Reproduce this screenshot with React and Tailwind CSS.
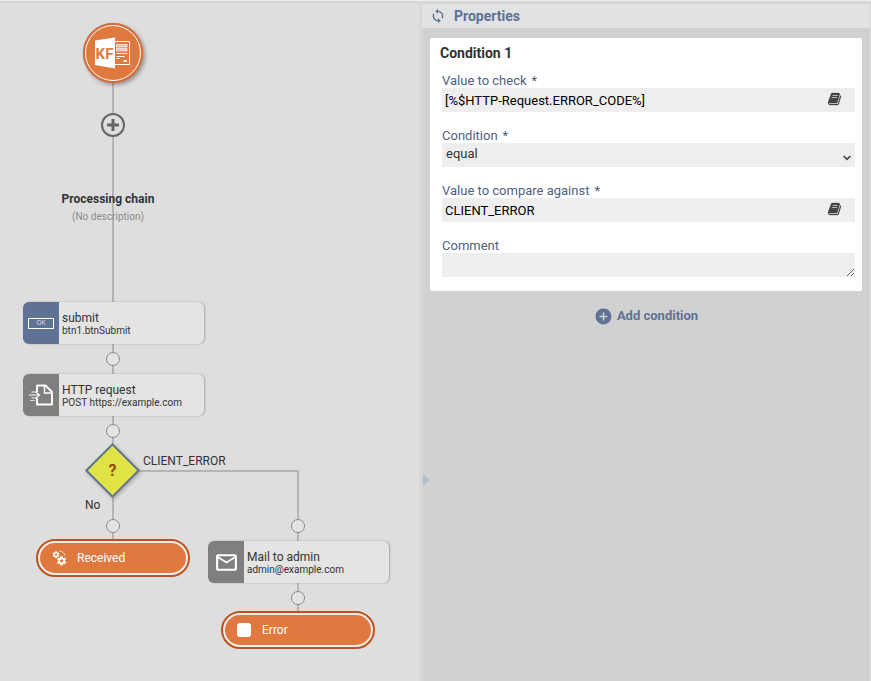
import { useState } from "react";
import { MdAddCircle, MdLoop, MdOutlineMail } from "react-icons/md";

const TEXT_FIELD =
  "w-full h-6 bg-[#eeeeee] px-[3px] text-[13px] text-black outline-none";

function BookIcon() {
  return (
    <svg viewBox="0 0 1792 1792" className="size-[14px]" fill="#444444" stroke="#444444" strokeWidth="40">
      <path d="M1639 478q40 57 18 129l-275 906q-19 64-76.5 107.5t-122.5 43.5h-923q-77 0-148.5-53.5t-99.5-131.5q-24-67-2-127 0-4 3-27t4-37q1-8-3-21.5t-3-19.5q2-11 8-21t16.5-23.5 16.5-23.5q23-38 45-91.5t30-91.5q3-10 .5-30t-.5-28q3-11 17-28t17-23q21-36 42-92t25-90q1-9-2.5-32t.5-28q4-13 22-30.5t22-22.5q19-26 42.5-84.5t27.5-96.5q1-8-3-25.5t-2-26.5q2-8 9-18t18-23 17-21q8-12 16.5-30.5t15-35 16-36 19.5-32 26.5-23.5 36-11.5 47.5 5.5l-1 3q38-9 51-9h761q74 0 114 56t18 130l-274 906q-36 119-71.5 153.5t-128.5 34.5h-869q-27 0-38 15-11 16-1 43 24 70 144 70h923q29 0 56-15.5t35-41.5l300-987q7-22 5-57 38 15 59 43zm-1064 2q-4 13 2 22.5t20 9.5h608q13 0 25.5-9.5t16.5-22.5l21-64q4-13-2-22.5t-20-9.5h-608q-13 0-25.5 9.5t-16.5 22.5zm-83 256q-4 13 2 22.5t20 9.5h608q13 0 25.5-9.5t16.5-22.5l21-64q4-13-2-22.5t-20-9.5h-608q-13 0-25.5 9.5t-16.5 22.5z" />
    </svg>
  );
}

function FormLogo() {
  return (
    <svg viewBox="0 0 36 32" className="w-9 h-8">
      <rect x="19" y="4.5" width="15.5" height="23" fill="none" stroke="#fff" />
      <rect x="21.5" y="7.5" width="10.5" height="2.5" fill="#f0c0a5" stroke="#fff" strokeWidth=".6" />
      <rect x="21.5" y="11.5" width="10.5" height="2.5" fill="#f0c0a5" stroke="#fff" strokeWidth=".6" />
      <path d="M21.5 16.5h11M21.5 19.5h8M21.5 21.5h3" stroke="#fff" strokeWidth="1.2" />
      <rect x="28.5" y="23" width="3.5" height="2" fill="#fff" />
      <path d="M0 3.500 20 .5v31L0 28z" fill="#fff" />
      <text
        x="9.5"
        y="21.5"
        textAnchor="middle"
        fontSize="15"
        fontWeight="700"
        fontFamily="'Liberation Sans Narrow', Roboto, sans-serif"
        fill="#e07940"
      >
        KF
      </text>
    </svg>
  );
}

function OkIcon() {
  return (
    <span className="flex h-[11px] w-[26px] items-center justify-center border border-white text-[7px] leading-none text-[#d5dae4]">
      OK
    </span>
  );
}

function RequestIcon() {
  return (
    <svg viewBox="0 0 24 24" className="size-6" fill="none" stroke="#fff">
      <path d="M8 9V2.500h8.500L23 9v12.500H8V15" strokeWidth="1.900" strokeLinejoin="round" />
      <path d="M15.500 3v7H22" strokeWidth="1.500" />
      <path d="M2.500 9H7l3.500 3L7 15H2.500M0 12h10" strokeWidth="1.100" />
      <path d="M1 17.500h5" strokeWidth="1" opacity=".7" />
    </svg>
  );
}

function Gear({ cx, cy, r }) {
  return (
    <g transform={`translate(${cx} ${cy})`}>
      {[0, 60, 120].map((a) => (
        <path key={a} d={`M0 ${-r}V${r}`} transform={`rotate(${a})`} stroke="#fff" strokeWidth={r / 1.8} />
      ))}
      <circle r={r * 0.74} fill="#fff" />
      <circle r={r * 0.36} fill="#e07940" />
    </g>
  );
}

function GearsIcon() {
  return (
    <svg viewBox="0 0 15 16" className="w-[15px] h-4">
      <Gear cx={4} cy={4.6} r={3.3} />
      <Gear cx={9.6} cy={10.8} r={4.6} />
      <path d="M7 1c3 0 5 1.500 6 4.500" fill="none" stroke="#fff" strokeWidth=".7" />
    </svg>
  );
}

function Joint({ className }) {
  return (
    <span
      className={`absolute size-[14px] rounded-full border border-[#8f8990] bg-[#e4e4e2] ${className}`}
    />
  );
}

function ActionNode({ title, subtitle, icon, iconBg, className }) {
  return (
    <div
      className={`absolute flex h-[42px] w-[181px] overflow-hidden rounded-md bg-[#e4e4e2] text-[#333333] shadow-[1px_0_2px_rgba(0,0,0,0.25)] ${className}`}
    >
      <span className={`flex w-9 shrink-0 items-center justify-center ${iconBg}`}>
        {icon}
      </span>
      <div className="flex flex-col justify-center pl-[3px] pt-px">
        <span className="text-xs leading-[14px]">{title}</span>
        <span className="text-[10px] leading-3">{subtitle}</span>
      </div>
    </div>
  );
}

function EndNode({ label, icon, className }) {
  return (
    <div
      className={`absolute h-[38px] w-[154px] rounded-full border-2 border-[#bd5420] bg-[#f0eeec] p-[2px] ${className}`}
    >
      <div className="flex h-full items-center rounded-full bg-[#e07940] pl-3 text-xs text-white">
        <span className="flex w-[25px]">{icon}</span>
        {label}
      </div>
    </div>
  );
}

function ProcessCanvas() {
  return (
    <main className="relative w-[419px] shrink-0 bg-[#dedede]">
      {/* Connectors */}
      <svg className="absolute left-0 top-0 h-full w-full" fill="none" stroke="#b5b5b5" strokeWidth="2">
        <path d="M113 70V540" />
        <path d="M113 468H298V612" />
      </svg>

      <div className="absolute left-[83px] top-5 flex size-[60px] items-center justify-center rounded-full bg-[#e07940] shadow-[2px_2px_4px_rgba(0,0,0,0.35)] ring-2 ring-inset ring-[#d06e3e]">
        <span className="absolute inset-[2px] rounded-full border border-white" />
        <FormLogo />
      </div>

      <button
        aria-label="Add"
        className="absolute left-[101px] top-[110px] size-6 rounded-full border-2 border-[#666666] bg-[#dedede]"
      >
        <svg viewBox="0 0 20 20" stroke="#666666" strokeWidth="3">
          <path d="M10 4v12M4 10h12" />
        </svg>
      </button>

      <div className="absolute left-[23px] top-[188px] w-[170px] text-center">
        <h2 className="text-xs font-bold leading-4 text-[#333333]">Processing chain</h2>
        <p className="text-[10px] leading-5 text-[#8a8a8a]">(No description)</p>
      </div>

      <ActionNode
        title="submit"
        subtitle="btn1.btnSubmit"
        icon={<OkIcon />}
        iconBg="bg-[#607196]"
        className="left-[23px] top-[299px]"
      />
      <Joint className="left-[106px] top-[349px]" />
      <ActionNode
        title="HTTP request"
        subtitle="POST https://example.com"
        icon={<RequestIcon />}
        iconBg="bg-[#7f7f7f]"
        className="left-[23px] top-[371px]"
      />
      <Joint className="left-[106px] top-[421px]" />

      <div className="absolute left-[93px] top-[448px] flex size-[39px] rotate-45 items-center justify-center border-2 border-[#607196] bg-[#dfe345] shadow-[2px_0_4px_rgba(0,0,0,0.25)]">
        <span className="-rotate-45 text-base font-bold text-[#964b00]">?</span>
      </div>
      <span className="absolute left-[143px] top-[450px] text-xs leading-4 text-[#333333]">
        CLIENT_ERROR
      </span>
      <span className="absolute left-[85px] top-[494px] text-xs leading-4 text-[#333333]">No</span>

      <Joint className="left-[106px] top-[516px]" />
      <EndNode label="Received" icon={<GearsIcon />} className="left-9 top-[536px]" />

      <Joint className="left-[291px] top-[516px]" />
      <ActionNode
        title="Mail to admin"
        subtitle="admin@example.com"
        icon={<MdOutlineMail size={25} color="#fff" />}
        iconBg="bg-[#7f7f7f]"
        className="left-[208px] top-[538px]"
      />
      <Joint className="left-[291px] top-[588px]" />
      <EndNode
        label="Error"
        icon={<span className="size-[14px] rounded-[3px] bg-white" />}
        className="left-[221px] top-[608px]"
      />
    </main>
  );
}

function Field({ id, label, required, children }) {
  return (
    <div>
      <label htmlFor={id} className="block text-[13px] leading-[14px] text-[#50607f]">
        {label}
        {required && <span className="ml-[5px]">*</span>}
      </label>
      <div className="relative flex">{children}</div>
    </div>
  );
}

function BookButton() {
  return (
    <button type="button" aria-label="Browse" className="absolute right-[13px] top-1">
      <BookIcon />
    </button>
  );
}

function PropertiesPanel() {
  const [form, setForm] = useState({
    value: "[%$HTTP-Request.ERROR_CODE%]",
    condition: "equal",
    compare: "CLIENT_ERROR",
    comment: "",
  });

  const update = (key) => (e) => setForm({ ...form, [key]: e.target.value });

  return (
    <aside className="min-w-0 flex-1 border-r border-t border-r-[#dadada] border-t-[#d6d6d6] bg-[#d1d1d1]">
      <header className="flex h-6 items-center gap-2 bg-[#e1e2e3] pl-2 text-[#607196]">
        <MdLoop size={16} />
        <h1 className="text-sm font-bold">Properties</h1>
      </header>

      <form className="mx-2 mt-[10px] rounded-xs bg-white pb-[14px]">
        <h2 className="px-[10px] py-[5px] text-sm font-bold leading-5 text-[#333333]">
          Condition 1
        </h2>
        <div className="flex flex-col gap-[17px] pl-3 pr-[7px] pt-[6px]">
          <Field id="value" label="Value to check" required>
            <input id="value" className={TEXT_FIELD} value={form.value} onChange={update("value")} />
            <BookButton />
          </Field>
          <Field id="condition" label="Condition" required>
            <select
              id="condition"
              className="h-6 w-full appearance-none bg-[#eeeeee] px-1 pb-[2px] text-[13px] text-[#333333] outline-none"
              value={form.condition}
              onChange={update("condition")}
            >
              <option value="equal">equal</option>
            </select>
            <svg
              viewBox="0 0 8 6"
              className="pointer-events-none absolute right-1 top-3 h-[6px] w-2"
              fill="none"
              stroke="#444444"
              strokeWidth="1.6"
            >
              <path d="M.6 1 4 4.400 7.400 1" />
            </svg>
          </Field>
          <Field id="compare" label="Value to compare against" required>
            <input id="compare" className={TEXT_FIELD} value={form.compare} onChange={update("compare")} />
            <BookButton />
          </Field>
          <Field id="comment" label="Comment">
            <textarea id="comment" rows={1} className={TEXT_FIELD} value={form.comment} onChange={update("comment")} />
          </Field>
        </div>
      </form>

      <button className="mx-auto mt-[15px] flex items-center gap-1 text-[13px] font-bold leading-5 text-[#607196]">
        <MdAddCircle size={19} />
        Add condition
      </button>
    </aside>
  );
}

export default function App() {
  return (
    <div className="flex min-h-screen flex-col border-t border-[#ececec] bg-[#d6d6d6] pt-[2px] font-[Roboto,sans-serif]">
      <div className="flex flex-1">
        <ProcessCanvas />
        <div className="relative w-[3px] bg-[#d8d8d8]">
          <svg viewBox="0 0 6 12" className="absolute left-1 top-[471px] h-3 w-[6px]" fill="#b0bfd0">
            <path d="M0 0 6 6 0 12z" />
          </svg>
        </div>
        <PropertiesPanel />
      </div>
    </div>
  );
}
